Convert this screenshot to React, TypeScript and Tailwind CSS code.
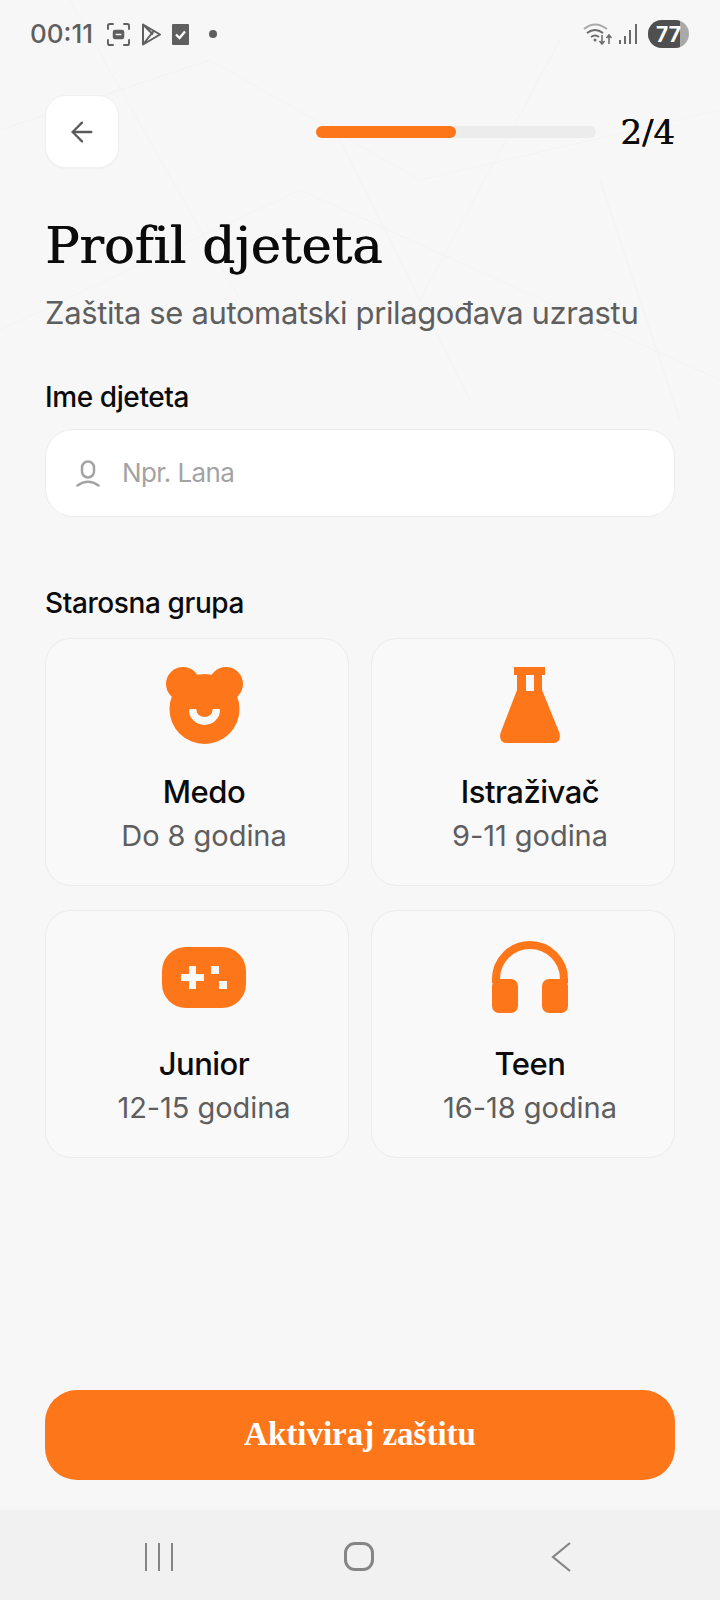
import { ArrowLeft } from "lucide-react"

const sans = "font-['Inter',sans-serif]"
const serif = "font-['Liberation_Serif',serif]"
const titleSerif = "font-['DejaVu_Serif',serif]"

function BearIcon() {
  return (
    <svg width="77" height="77" viewBox="0 0 77 77" fill="#fd7619">
      <circle cx="17" cy="17" r="17" />
      <circle cx="60" cy="17" r="17" />
      <circle cx="38.500" cy="42" r="35" />
      <rect x="14" y="14" width="49" height="16" />
      <path d="M24 43H29.500A9 8 0 0 0 47.500 43H53A14.500 14 0 0 1 24 43Z" fill="#f9f9f9" stroke="#f9f9f9" strokeWidth="2" strokeLinejoin="round" />
    </svg>
  )
}

function FlaskIcon() {
  return (
    <svg width="62" height="76" viewBox="0 0 62 76" fill="#fd7619">
      <path d="M15 0H46V8H43V23L60.500 66Q62.500 76 54 76H8Q-0.500 76 1.500 66L18 23V8H15Z" />
      <rect x="27" y="8" width="8" height="16" fill="#f9f9f9" />
    </svg>
  )
}

function GamepadIcon() {
  return (
    <svg width="84" height="61" viewBox="0 0 84 61" fill="#fd7619">
      <rect x="0" y="0" width="84" height="61" rx="24" />
      <path d="M27 19h7v8h8v7h-8v8h-7v-8h-8v-7h8z" fill="#f9f9f9" />
      <rect x="49" y="19" width="8" height="8" fill="#f9f9f9" />
      <rect x="57" y="34" width="8" height="8" fill="#f9f9f9" />
    </svg>
  )
}

function HeadphonesIcon() {
  return (
    <svg width="76" height="72" viewBox="0 0 76 72" fill="none">
      <path d="M4 42V38a34 34 0 0 1 68 0v4" stroke="#fd7619" strokeWidth="8" />
      <rect x="0" y="38" width="26" height="34" rx="7" fill="#fd7619" />
      <rect x="50" y="38" width="26" height="34" rx="7" fill="#fd7619" />
    </svg>
  )
}

function AgeCard({ icon, title, age }: { icon: React.ReactNode; title: string; age: string }) {
  return (
    <div className="h-[248px] rounded-[26px] border border-[#ececec] bg-[#f9f9f9] flex flex-col items-center pt-[28px] pl-[14px]">
      <div className="h-[76px] flex items-center justify-center">{icon}</div>
      <p className="mt-[29px] text-[31px] leading-[40px] font-medium tracking-[-0.5px] text-[#0b0b0b]">{title}</p>
      <p className="mt-[6px] text-[29px] leading-[36px] tracking-[-0.05px] text-[#5e5e5e]">{age}</p>
    </div>
  )
}

export default function App() {
  const cards = [
    { icon: <BearIcon />, title: "Medo", age: "Do 8 godina" },
    { icon: <FlaskIcon />, title: "Istraživač", age: "9-11 godina" },
    { icon: <GamepadIcon />, title: "Junior", age: "12-15 godina" },
    { icon: <HeadphonesIcon />, title: "Teen", age: "16-18 godina" },
  ]

  return (
    <div className={`${sans} relative w-[720px] h-[1600px] bg-[#f7f7f7] flex flex-col overflow-hidden`}>
      {/* faint background lines */}
      <svg className="absolute left-0 top-0" width="720" height="430" fill="none" stroke="#f3f3f3" strokeWidth="1">
        <path d="M0 130 L210 60 L420 180 L720 110 M70 0 L240 300 M330 120 L470 400 M560 40 L420 300 M0 330 L300 190 L720 380 M600 180 L680 420" />
      </svg>

      {/* status bar */}
      <div className="relative h-[68px] flex items-center justify-between pl-[30px] pr-[31px] text-[#5f5f5f]">
        <div className="flex items-center">
          <span className="text-[26px] leading-[34px] font-medium">00:11</span>
          <svg className="ml-[14px]" width="23" height="23" viewBox="0 0 24 24" fill="none" stroke="#5f5f5f" strokeWidth="2">
            <path d="M1 7V3Q1 1 3 1H7M17 1H21Q23 1 23 3V7M23 17V21Q23 23 21 23H17M7 23H3Q1 23 1 21V17" />
            <rect x="7" y="8" width="10" height="8" rx="1.500" fill="#5f5f5f" />
            <path d="M9 12H15" stroke="#f7f7f7" strokeWidth="1.500" />
          </svg>
          <svg className="ml-[11px]" width="21" height="23" viewBox="0 0 21 23" fill="none" stroke="#5f5f5f" strokeWidth="2" strokeLinejoin="round">
            <path d="M2 1.500L19 11.500L2 21.500ZM2 1.500L12 11.500M2 21.500L13 7.500" />
          </svg>
          <svg className="ml-[10px]" width="17" height="21" viewBox="0 0 17 21">
            <rect width="17" height="21" rx="1" fill="#5f5f5f" />
            <path d="M4 10.500L7.500 14L13 7.500" fill="none" stroke="#fff" strokeWidth="2.400" />
          </svg>
          <span className="ml-[20px] w-[8px] h-[8px] rounded-full bg-[#5f5f5f]" />
        </div>
        <div className="flex items-center">
          <svg width="30" height="22" viewBox="0 0 30 22" fill="none" stroke="#6a6a6a" strokeWidth="2">
            <path d="M1 6Q12 -3 24 6" stroke="#a8a8a8" />
            <path d="M4 10Q12 4 20 10M8 14Q12 11 16 14" />
            <circle cx="12" cy="17" r="1.500" fill="#6a6a6a" stroke="none" />
            <path d="M19 12V21M16.500 18L19 21L21.500 18M26 21V12M23.500 15L26 12L28.500 15" strokeWidth="1.500" />
          </svg>
          <svg className="ml-[5px]" width="20" height="20" viewBox="0 0 20 20" fill="#6a6a6a">
            <rect x="1" y="16" width="2" height="4" />
            <rect x="6" y="12" width="2" height="8" />
            <rect x="11" y="6" width="2" height="14" />
            <rect x="17" y="0" width="2" height="20" />
          </svg>
          <div className="ml-[10px] relative w-[41px] h-[28px] rounded-full overflow-hidden bg-[#a9a9a9]">
            <div className="absolute left-0 top-0 h-full w-[32px] bg-[#4f4f4f]" />
            <span className="absolute inset-0 flex items-center justify-center text-[21px] leading-none font-bold text-white">77</span>
          </div>
        </div>
      </div>

      {/* main content */}
      <div className="relative flex-1 px-[45px] flex flex-col">
        <div className="mt-[27px] flex items-center">
          <button className="w-[74px] h-[73px] rounded-[21px] bg-white border border-[#f1f1f1] shadow-[0_1px_2px_rgba(0,0,0,0.03)] flex items-center justify-center">
            <ArrowLeft size={32} color="#5a5a5a" strokeWidth={1.7} />
          </button>
          <div className="ml-[197px] w-[280px] h-[12px] rounded-full bg-[#ececec]">
            <div className="w-[140px] h-full rounded-full bg-[#fd7619]" />
          </div>
          <span className={`${titleSerif} ml-auto text-[34px] leading-[44px] text-[#0b0b0b] [text-shadow:0.4px_0_0_#0b0b0b]`}>2/4</span>
        </div>

        <h1 className={`${titleSerif} mt-[46px] text-[51px] leading-[64px] font-normal text-[#0b0b0b] [font-variant-ligatures:none] [text-shadow:0.8px_0_0_#0b0b0b]`}>Profil djeteta</h1>
        <p className="mt-[15px] text-[31px] leading-[40px] tracking-[-0.37px] text-[#5e5e5e]">Zaštita se automatski prilagođava uzrastu</p>

        <label className="mt-[46px] text-[28px] leading-[36px] tracking-[-0.4px] font-medium text-[#0b0b0b]">Ime djeteta</label>
        <div className="mt-[14px] h-[88px] rounded-[28px] bg-white border border-[#ececec] flex items-center pl-[30px]">
          <svg width="24" height="27" viewBox="0 0 24 27" fill="none" stroke="#a3a3a3" strokeWidth="2.500">
            <rect x="6" y="1.500" width="12" height="16" rx="6" />
            <path d="M1.500 25.500Q12 18 22.500 25.500" strokeLinecap="round" />
          </svg>
          <span className="ml-[22px] text-[26px] leading-[36px] tracking-[-0.6px] text-[#a3a3a3]">Npr. Lana</span>
        </div>

        <label className="mt-[68px] text-[28px] leading-[36px] tracking-[-0.4px] font-medium text-[#0b0b0b]">Starosna grupa</label>
        <div className="mt-[17px] grid grid-cols-2 gap-x-[22px] gap-y-[24px]">
          {cards.map((c) => (
            <AgeCard key={c.title} icon={c.icon} title={c.title} age={c.age} />
          ))}
        </div>

        <button className={`${serif} mt-auto mb-[30px] h-[90px] rounded-[32px] bg-[#fd7619] text-white text-[33px] font-bold`}>
          Aktiviraj zaštitu
        </button>
      </div>

      {/* android nav bar */}
      <div className="relative h-[90px] bg-[#f1f1f1] flex items-center pl-[145px] pt-[3px]">
        <div className="flex gap-[11px]">
          <span className="w-[2px] h-[28px] bg-[#858585]" />
          <span className="w-[2px] h-[28px] bg-[#858585]" />
          <span className="w-[2px] h-[28px] bg-[#858585]" />
        </div>
        <span className="ml-[171px] w-[30px] h-[29px] rounded-[11px] border-[3px] border-[#858585]" />
        <svg className="ml-[177px]" width="20" height="30" viewBox="0 0 20 30" fill="none" stroke="#858585" strokeWidth="2.200">
          <path d="M19 1L2 15L19 29" />
        </svg>
      </div>
    </div>
  )
}
